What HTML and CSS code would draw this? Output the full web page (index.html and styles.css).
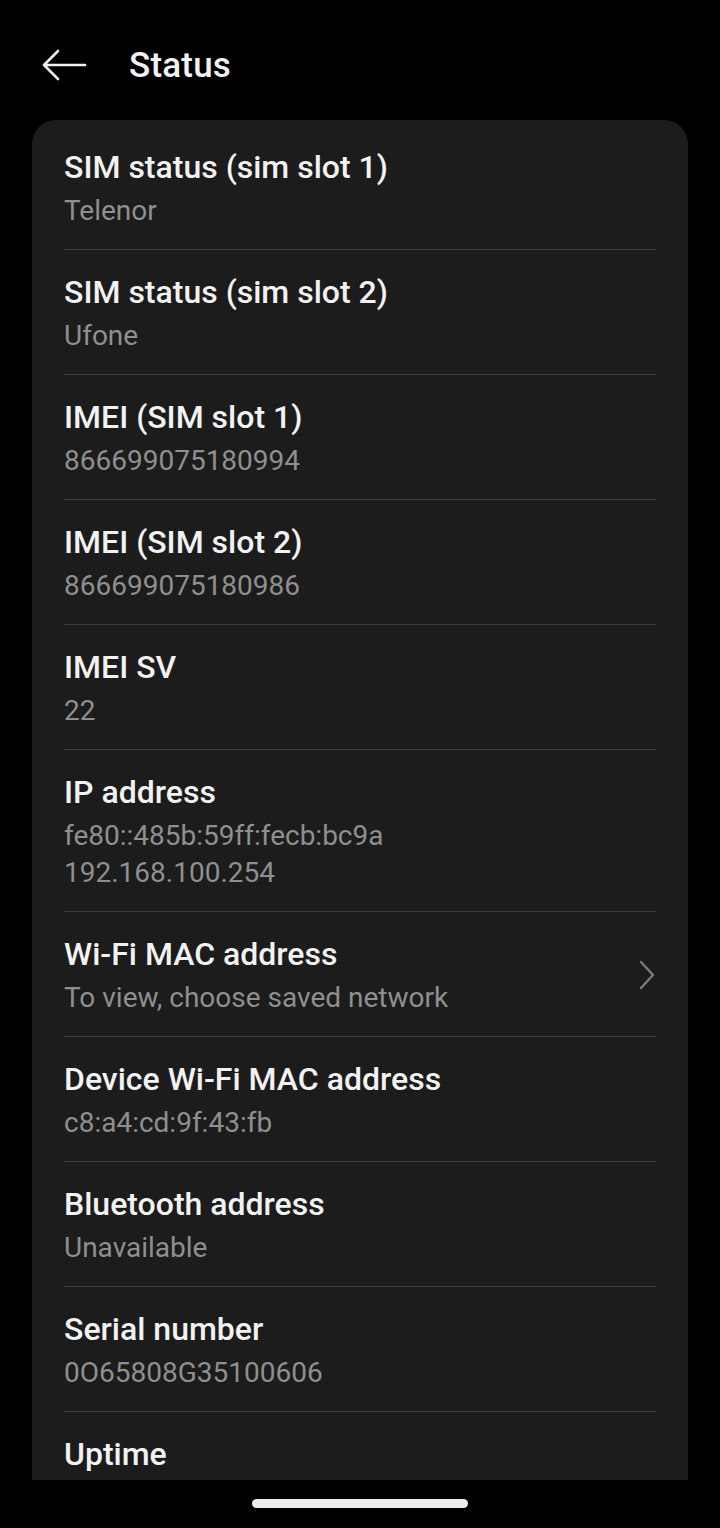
FILE: index.html
```html
<!DOCTYPE html>
<html lang="en">
<head>
<meta charset="utf-8">
<title>Status</title>
<link rel="stylesheet" href="styles.css">
</head>
<body>
<div class="screen">
  <header class="topbar">
    <svg class="back" width="46" height="32" viewBox="0 0 46 32" aria-hidden="true">
      <path d="M44 16 H3 M17 2 L3 16 L17 30" fill="none" stroke="#f2f2f2" stroke-width="2.6" stroke-linecap="round" stroke-linejoin="round"/>
    </svg>
    <h1 class="title">Status</h1>
  </header>
  <main class="card">
    <div class="row"><div class="text"><div class="label">SIM status (sim slot 1)</div><div class="value">Telenor</div></div></div>
    <div class="row"><div class="text"><div class="label">SIM status (sim slot 2)</div><div class="value">Ufone</div></div></div>
    <div class="row"><div class="text"><div class="label">IMEI (SIM slot 1)</div><div class="value">866699075180994</div></div></div>
    <div class="row"><div class="text"><div class="label">IMEI (SIM slot 2)</div><div class="value">866699075180986</div></div></div>
    <div class="row"><div class="text"><div class="label">IMEI SV</div><div class="value">22</div></div></div>
    <div class="row"><div class="text"><div class="label">IP address</div><div class="value">fe80::485b:59ff:fecb:bc9a</div><div class="value">192.168.100.254</div></div></div>
    <div class="row"><div class="text"><div class="label">Wi-Fi MAC address</div><div class="value">To view, choose saved network</div></div>
      <svg class="chev" width="18" height="30" viewBox="0 0 18 30" aria-hidden="true"><path d="M3 2 L15 15 L3 28" fill="none" stroke="#7a7a7a" stroke-width="2.4" stroke-linecap="round" stroke-linejoin="round"/></svg>
    </div>
    <div class="row"><div class="text"><div class="label">Device Wi-Fi MAC address</div><div class="value">c8:a4:cd:9f:43:fb</div></div></div>
    <div class="row"><div class="text"><div class="label">Bluetooth address</div><div class="value">Unavailable</div></div></div>
    <div class="row"><div class="text"><div class="label">Serial number</div><div class="value">0O65808G35100606</div></div></div>
    <div class="row last"><div class="text"><div class="label">Uptime</div></div></div>
  </main>
  <footer class="navbar"><div class="homebar"></div></footer>
</div>
</body>
</html>
```
FILE: styles.css
```css
* { box-sizing: border-box; }
html, body {
  margin: 0;
  padding: 0;
  background: #000;
}
body {
  font-family: Roboto, "Noto Sans", "Liberation Sans", sans-serif;
  color: #f2f2f2;
}
.screen {
  width: 720px;
  height: 1528px;
  display: flex;
  flex-direction: column;
  overflow: hidden;
}
.topbar {
  height: 120px;
  flex: none;
  display: flex;
  align-items: center;
  padding-left: 41px;
  padding-top: 10px;
}
.back { display: block; }
.title {
  margin: 0 0 0 42px;
  font-size: 35px;
  font-weight: 500;
  letter-spacing: 0.2px;
  color: #f2f2f2;
}
.card {
  flex: none;
  height: 1360px;
  margin: 0 32px;
  background: #1c1c1c;
  border-radius: 24px 24px 0 0;
  padding: 5px 32px 0;
  overflow: hidden;
}
.row {
  display: flex;
  align-items: center;
  padding: 22px 0 20px;
  border-bottom: 1px solid #3a3a3a;
}
.row.last { border-bottom: none; }
.text { flex: 1; min-width: 0; }
.label {
  font-size: 32px;
  line-height: 40px;
  font-weight: 500;
  color: #f2f2f2;
  margin-bottom: 5px;
}
.value {
  font-size: 28px;
  line-height: 37px;
  color: #8f8f8f;
}
.chev { flex: none; margin-right: 0; }
.navbar {
  flex: 1;
  display: flex;
  justify-content: center;
  padding-top: 19px;
}
.homebar {
  width: 216px;
  height: 9px;
  border-radius: 5px;
  background: #ececec;
}
```
